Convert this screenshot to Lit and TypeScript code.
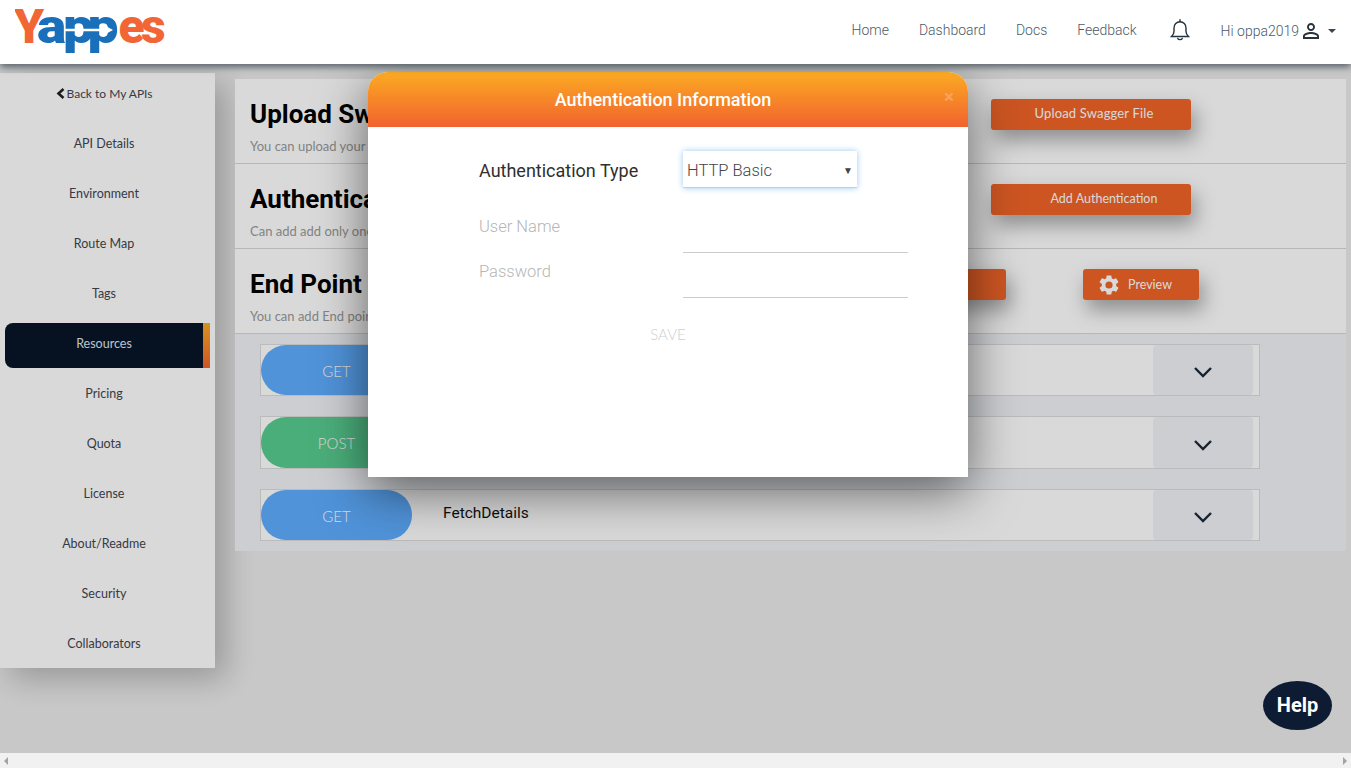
import { css, html, LitElement, svg } from 'lit'
import { customElement } from 'lit/decorators.js'

const NAV_ITEMS = [
  'API Details',
  'Environment',
  'Route Map',
  'Tags',
  'Resources',
  'Pricing',
  'Quota',
  'License',
  'About/Readme',
  'Security',
  'Collaborators',
]

const RESOURCES = [
  { method: 'GET', name: '' },
  { method: 'POST', name: '' },
  { method: 'GET', name: 'FetchDetails' },
]

const GEAR = svg`<path d="M19.14 12.94c.04-.3.06-.61.06-.94s-.02-.64-.07-.94l2.03-1.58a.49.49 0 0 0 .12-.61l-1.92-3.32a.49.49 0 0 0-.59-.22l-2.39.96c-.5-.38-1.03-.7-1.62-.94l-.36-2.54a.48.48 0 0 0-.48-.41h-3.84a.48.48 0 0 0-.47.41l-.36 2.54c-.59.24-1.13.57-1.62.94l-2.39-.96a.49.49 0 0 0-.59.22L2.74 8.87a.48.48 0 0 0 .12.61l2.03 1.58c-.05.3-.09.63-.09.94s.02.64.07.94l-2.03 1.58a.49.49 0 0 0-.12.61l1.92 3.32c.12.22.37.29.59.22l2.39-.96c.5.38 1.03.7 1.62.94l.36 2.54c.05.24.24.41.48.41h3.84c.24 0 .44-.17.47-.41l.36-2.54c.59-.24 1.13-.56 1.62-.94l2.39.96c.22.08.47 0 .59-.22l1.92-3.32a.48.48 0 0 0-.12-.61l-2.01-1.58zM12 15.6A3.6 3.6 0 1 1 12 8.4a3.6 3.6 0 0 1 0 7.2z"/>`

const PERSON = svg`<path d="M12 5.9c1.16 0 2.1.94 2.1 2.1s-.94 2.1-2.1 2.1S9.9 9.16 9.9 8s.94-2.1 2.1-2.1m0 9c2.97 0 6.1 1.46 6.1 2.1v1.1H5.9V17c0-.64 3.13-2.1 6.1-2.1M12 4C9.79 4 8 5.79 8 8s1.79 4 4 4 4-1.79 4-4-1.79-4-4-4zm0 9c-2.67 0-8 1.34-8 4v3h16v-3c0-2.66-5.33-4-8-4z"/>`

@customElement('app-root')
export class AppRoot extends LitElement {
  static override styles = css`
    :host {
      display: flex;
      flex-direction: column;
      height: 100vh;
      overflow: hidden;
      font-family: "Lato", "Liberation Sans", sans-serif;
      color: #333;
    }

    /* top bar sits above the modal backdrop */
    .topbar {
      position: relative;
      z-index: 3;
      flex: none;
      height: 64px;
      display: flex;
      align-items: center;
      background: #fff;
      box-shadow: 0 3px 7px rgba(50, 62, 72, 0.75);
      font-family: "Roboto", sans-serif;
      font-weight: 300;
      font-size: 14px;
      color: #4c5a66;
    }

    .logo {
      display: block;
      flex: none;
      margin-left: 15px;
      width: 150px;
      height: 50px;
    }

    .logo text {
      font-family: "Roboto", sans-serif;
      font-weight: 900;
      font-size: 48px;
    }

    .links {
      display: flex;
      margin-left: auto;
      margin-bottom: 4px;
      gap: 30px;
    }

    .bell {
      display: block;
      width: 22px;
      height: 22px;
      margin-left: 32px;
      margin-bottom: 4px;
      fill: none;
      stroke: #26323c;
      stroke-width: 1.4;
    }

    .user {
      display: flex;
      align-items: center;
      margin: 0 15px 2px 30px;
    }

    .user svg {
      display: block;
      width: 24px;
      height: 24px;
      fill: #26323c;
    }

    .caret {
      width: 0;
      height: 0;
      margin-left: 5px;
      border: 4px solid transparent;
      border-top-color: #3a4650;
      border-bottom-width: 0;
    }

    .main {
      position: relative;
      flex: 1;
      display: flex;
      align-items: flex-start;
      background: #ececec;
      overflow: hidden;
    }

    .sidebar {
      flex: none;
      width: 215px;
      margin-top: 9px;
      display: flex;
      flex-direction: column;
      gap: 5px;
      background: #fff;
      box-shadow: 10px 10px 30px rgba(0, 0, 0, 0.25);
      font-size: 12.5px;
      color: #3f4650;
    }

    .nav-item {
      height: 45px;
      margin: 0 5px;
      padding: 15px 7px 0 0;
      box-sizing: border-box;
      line-height: 12px;
      text-align: center;
    }

    .nav-item.back {
      font-size: 12px;
    }

    .nav-item.back svg {
      width: 9px;
      height: 11px;
      margin-right: 2px;
      vertical-align: -1px;
      fill: none;
      stroke: #222;
      stroke-width: 2.6;
    }

    .nav-item.active {
      background-color: #081528;
      color: #dfe6ee;
      border-right: 7px solid;
      border-image: linear-gradient(#fbb024, #f2632d) 1;
      padding-right: 0;
      clip-path: inset(0 round 8px 0 0 8px);
    }

    .content {
      flex: none;
      width: 1111px;
      margin: 15px 0 0 20px;
      background: #f0f2f7;
    }

    .section {
      display: flex;
      height: 85px;
      box-sizing: border-box;
      background: #fff;
      border-bottom: 1px solid #d8d8d8;
    }

    .section-text {
      flex: none;
      width: 571px;
      padding: 19px 0 0 15px;
      box-sizing: border-box;
      white-space: nowrap;
      overflow: hidden;
    }

    .section-text h2 {
      margin: 0;
      font-family: "Roboto", sans-serif;
      font-size: 26px;
      font-weight: 700;
      line-height: 33px;
      color: #000;
    }

    .section-text p {
      margin: 7px 0 0;
      font-size: 13px;
      line-height: 16px;
      color: #9a9a9a;
    }

    .actions {
      display: flex;
      align-items: flex-start;
      padding-top: 20px;
    }

    .actions.single {
      padding-left: 185px;
    }

    .actions.pair {
      gap: 77px;
    }

    .btn {
      display: flex;
      align-items: center;
      justify-content: center;
      box-sizing: border-box;
      width: 200px;
      height: 31px;
      padding-bottom: 3px;
      border-radius: 3px;
      background: #f06429;
      box-shadow: 4px 10px 20px rgba(0, 0, 0, 0.35);
      font-size: 13px;
      letter-spacing: 0.15px;
      color: #fff;
    }

    .btn.upload {
      padding-left: 6px;
    }

    .btn.add {
      padding-left: 26px;
      font-size: 12.5px;
      letter-spacing: 0;
    }

    .btn.preview {
      width: 116px;
      gap: 7px;
      justify-content: flex-start;
      padding: 0 0 0 14px;
      font-size: 12.5px;
      letter-spacing: 0;
    }

    .btn.preview span {
      margin-bottom: 1px;
    }

    .btn svg {
      display: block;
      width: 24px;
      height: 24px;
      fill: #fff;
    }

    .rows {
      display: flex;
      flex-direction: column;
      gap: 20px;
      padding: 10px 0 10px 25px;
    }

    .row {
      display: flex;
      align-items: center;
      box-sizing: border-box;
      width: 1000px;
      height: 52px;
      background: #fff;
      border: 1px solid #dcdcdc;
    }

    .row:nth-child(2) {
      height: 53px;
    }

    .pill {
      flex: none;
      display: flex;
      align-items: center;
      justify-content: center;
      width: 151px;
      height: 100%;
      padding-top: 1px;
      box-sizing: border-box;
      border-radius: 25px;
      background: #5fadff;
      font-size: 15px;
      font-weight: 300;
      color: #fff;
    }

    .pill.post {
      background: #58cd90;
    }

    .res-name {
      margin: 0 0 4px 31px;
      font-family: "Roboto", sans-serif;
      font-size: 15.5px;
      color: #111;
    }

    .toggle {
      display: flex;
      align-items: center;
      justify-content: center;
      width: 100px;
      height: 100%;
      margin-left: auto;
      margin-right: 6px;
      border-radius: 4px;
      background: #f0f2f7;
    }

    .toggle svg {
      width: 20px;
      height: 13px;
      margin-top: 5px;
      fill: none;
      stroke: #1b2a38;
      stroke-width: 2.4;
    }

    .backdrop {
      position: absolute;
      inset: 0;
      z-index: 1;
      padding: 8px 0 0 368px;
      background: rgba(0, 0, 0, 0.15);
    }

    .modal {
      width: 600px;
      height: 405px;
      background: #fff;
      border-radius: 20px 20px 0 0;
      box-shadow: 0 14px 50px rgba(0, 0, 0, 0.55);
    }

    .modal-head {
      position: relative;
      height: 55px;
      padding-right: 10px;
      border-radius: 20px 20px 0 0;
      background: linear-gradient(#fbab22, #f2622f);
      font-family: "Roboto", sans-serif;
      font-size: 18px;
      font-weight: 500;
      line-height: 55px;
      text-align: center;
      color: #fff;
    }

    .close {
      position: absolute;
      top: -3px;
      right: 14px;
      font-size: 19px;
      font-weight: 700;
      color: #f9a35a;
    }

    .form {
      display: grid;
      grid-template-columns: 204px 225px;
      padding: 24px 0 0 111px;
      font-family: "Roboto", sans-serif;
    }

    .form label {
      padding-top: 1px;
      font-size: 16.5px;
      font-weight: 300;
      line-height: 36px;
      color: #b5b5b5;
    }

    .form label.type {
      padding-top: 0;
      font-size: 18px;
      font-weight: 400;
      line-height: 40px;
      height: 57px;
      color: #2f2f2f;
    }

    .select {
      display: flex;
      align-items: center;
      justify-content: space-between;
      box-sizing: border-box;
      width: 174px;
      height: 37px;
      padding: 2px 4px 0;
      background: #fff;
      border-bottom: 1px solid #ccc;
      box-shadow: 0 0 6px rgba(120, 180, 240, 0.75);
      font-size: 16.5px;
      font-weight: 300;
      color: #444;
    }

    .select i {
      font-size: 10px;
      font-style: normal;
      font-weight: 400;
      color: #444;
    }

    .form input {
      display: block;
      width: 100%;
      height: 45px;
      padding: 0;
      box-sizing: border-box;
      border: 0;
      border-bottom: 1px solid #ccc;
      outline: none;
      background: transparent;
    }

    .save {
      margin-top: 26px;
      font-size: 15px;
      font-weight: 300;
      line-height: 20px;
      text-align: center;
      color: #cfcfcf;
    }

    .help {
      position: absolute;
      right: 19px;
      bottom: 23px;
      z-index: 2;
      width: 69px;
      height: 49px;
      border-radius: 50%;
      background: #0d1c33;
      font-family: "Roboto", sans-serif;
      font-size: 20px;
      font-weight: 700;
      line-height: 48px;
      text-align: center;
      color: #fff;
    }

    .scrollbar {
      flex: none;
      display: flex;
      align-items: center;
      justify-content: space-between;
      height: 15px;
      padding: 0 4px;
      box-sizing: border-box;
      background: #f1f1f1;
    }

    .scrollbar b {
      width: 0;
      height: 0;
      border: 4px solid transparent;
    }

    .scrollbar b.left {
      border-left-width: 0;
      border-right-color: #a3a3a3;
    }

    .scrollbar b.right {
      border-right-width: 0;
      border-left-color: #a3a3a3;
    }
  `

  // letters are placed one by one, the real logo interlocks them
  private renderLogo() {
    return html`
      <svg class="logo" viewBox="0 0 150 50" aria-label="Yappes">
        <text y="36" fill="#f26636" x="-1">Y</text>
        <text transform="translate(22 36) scale(1.15 1)" fill="#1a6fbb" x="0 22.600 44">app</text>
        <text y="36" fill="#f26636" x="103.500 126">es</text>
        <path d="M50 23h38" stroke="#fff" stroke-width="2.4"/>
        <path d="M87 17l11 6-11 6z" fill="#fff"/>
      </svg>
    `
  }

  private renderSidebar() {
    return html`
      <nav class="sidebar">
        <div class="nav-item back">
          <svg viewBox="0 0 9 11"><path d="M7.500 1l-5 4.500 5 4.500"/></svg>Back to My APIs
        </div>
        ${NAV_ITEMS.map(
          (item) => html`
            <div class="nav-item ${item === 'Resources' ? 'active' : ''}">${item}</div>
          `,
        )}
      </nav>
    `
  }

  private renderResource(res: { method: string; name: string }) {
    return html`
      <div class="row">
        <div class="pill ${res.method === 'POST' ? 'post' : ''}">${res.method}</div>
        <div class="res-name">${res.name}</div>
        <div class="toggle">
          <svg viewBox="0 0 20 13"><path d="M2 2l8 8 8-8"/></svg>
        </div>
      </div>
    `
  }

  private renderModal() {
    return html`
      <div class="backdrop">
        <div class="modal">
          <div class="modal-head">Authentication Information<span class="close">×</span></div>
          <div class="form">
            <label class="type">Authentication Type</label>
            <div>
              <div class="select">HTTP Basic<i>▼</i></div>
            </div>
            <label>User Name</label>
            <input type="text" />
            <label>Password</label>
            <input type="password" />
          </div>
          <div class="save">SAVE</div>
        </div>
      </div>
    `
  }

  override render() {
    return html`
      <header class="topbar">
        ${this.renderLogo()}
        <div class="links">
          <span>Home</span>
          <span>Dashboard</span>
          <span>Docs</span>
          <span>Feedback</span>
        </div>
        <svg class="bell" viewBox="0 0 22 22">
          <path d="M2.500 17.500c1.500-1.500 2.500-2.500 2.500-5V9c0-3.500 2.500-6.300 6-6.300s6 2.800 6 6.300v3.500c0 2.500 1 3.500 2.500 5z"/>
          <path d="M11 .8v2M8.800 19.500c.5 1.500 3.900 1.500 4.400 0" stroke-linecap="round"/>
        </svg>
        <div class="user">
          Hi oppa2019
          <svg viewBox="0 0 24 24">${PERSON}</svg>
          <span class="caret"></span>
        </div>
      </header>

      <div class="main">
        ${this.renderSidebar()}
        <section class="content">
          <div class="section">
            <div class="section-text">
              <h2>Upload Swagger</h2>
              <p>You can upload your Swagger file here</p>
            </div>
            <div class="actions single"><div class="btn upload">Upload Swagger File</div></div>
          </div>
          <div class="section">
            <div class="section-text">
              <h2>Authentication</h2>
              <p>Can add add only one authentication</p>
            </div>
            <div class="actions single"><div class="btn add">Add Authentication</div></div>
          </div>
          <div class="section">
            <div class="section-text">
              <h2>End Point Details</h2>
              <p>You can add End points here</p>
            </div>
            <div class="actions pair">
              <div class="btn">Add End Point</div>
              <div class="btn preview">
                <svg viewBox="0 0 24 24">${GEAR}</svg><span>Preview</span>
              </div>
            </div>
          </div>
          <div class="rows">${RESOURCES.map((res) => this.renderResource(res))}</div>
        </section>
        ${this.renderModal()}
        <div class="help">Help</div>
      </div>

      <div class="scrollbar"><b class="left"></b><b class="right"></b></div>
    `
  }
}
